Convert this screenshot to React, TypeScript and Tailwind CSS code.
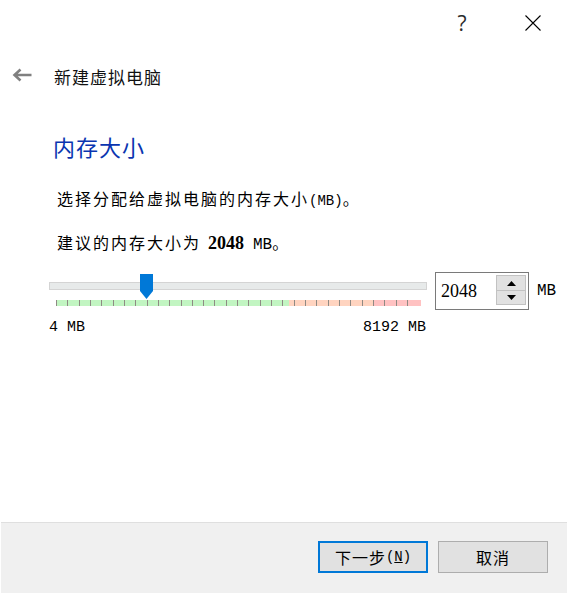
import React from "react";

const CJK = "font-['Noto_Sans_CJK_SC',sans-serif]";
const MONO = "font-['Liberation_Mono','Noto_Sans_CJK_SC',monospace]";
const SERIF = "font-['Liberation_Serif','Noto_Sans_CJK_SC',serif]";

const TICKS = Array.from({ length: 32 }, (_, k) => k * 11.32);

export default function App() {
  const min = 4;
  const max = 8192;
  const value = 2048;
  const travel = 365;
  const thumbLeft = ((value - min) / (max - min)) * travel;

  return (
    <div className={`w-[568px] h-[593px] bg-white flex flex-col text-black ${CJK}`}>
      <div className="flex-1 flex flex-col">
        {/* title bar */}
        <div className="h-[45px] flex items-center justify-end pr-[27px]">
          <div className="w-[20px] text-center text-[21px] leading-[24px] text-[#2b2b2b] font-['Open_Sans',sans-serif] mt-[1px]">
            ?
          </div>
          <div className="ml-[53px] w-[16px] h-[16px]">
            <svg width="16" height="16" viewBox="0 0 16 16">
              <path d="M0.5 0.5 L15.5 15.5 M15.5 0.5 L0.5 15.5" stroke="#000" strokeWidth="1.1" fill="none" />
            </svg>
          </div>
        </div>

        {/* header */}
        <div className="mt-[17px] h-[30px] flex items-center pl-[12px]">
          <svg width="20" height="14" viewBox="0 0 20 14" className="mb-[4px]">
            <path d="M19.5 7 H3 M8.5 1.5 L2.5 7 L8.5 12.5" stroke="#808080" strokeWidth="2.6" fill="none" />
          </svg>
          <div className="ml-[22px] text-[17px] leading-[30px] tracking-[1px] text-[#111]">新建虚拟电脑</div>
        </div>

        {/* heading */}
        <div className="mt-[38px] h-[32px] pl-[53px] text-[22px] leading-[32px] tracking-[1px] text-[#0a35b0]">
          内存大小
        </div>

        {/* para 1 */}
        <div className="mt-[24px] h-[24px] pl-[57px] text-[16px] leading-[24px] whitespace-nowrap">
          <span className="tracking-[2px]">选择分配给虚拟电脑的内存大小</span>
          <span className={`${MONO} text-[14px]`}>(MB)</span>
          <span>。</span>
        </div>

        {/* para 2 */}
        <div className="mt-[20px] h-[24px] pl-[57px] text-[16px] leading-[24px] whitespace-nowrap">
          <span className="tracking-[2px]">建议的内存大小为</span>
          <span className={`${SERIF} text-[18px] font-bold ml-[7px]`}>2048</span>
          <span className={`${MONO} text-[16px] ml-[9px]`}>MB</span>
          <span>。</span>
        </div>

        {/* slider row */}
        <div className="mt-[18px] flex items-start pl-[49px]">
          <div className="relative w-[378px]">
            <div className="mt-[10px] h-[8px] bg-[#e7eaea] border border-[#d4d4d4]" />
            <div className="mt-[10px] ml-[7px] w-[365px] h-[6px] relative flex">
              <div className="w-[233px] h-full bg-[#c2f5c2]" />
              <div className="w-[84px] h-full bg-[#ffd4c0]" />
              <div className="flex-1 h-full bg-[#ffc2c2]" />
              {TICKS.map((x, i) => (
                <div
                  key={i}
                  className="absolute top-0 w-[1px] h-full bg-[#8f8a84]"
                  style={{ left: Math.round(x) }}
                />
              ))}
            </div>
            <div className={`mt-[14px] h-[16px] leading-[16px] flex justify-between ${MONO} text-[15px]`}>
              <span>4 MB</span>
              <span className="mr-[1px]">8192 MB</span>
            </div>
            <svg
              width="13"
              height="25"
              viewBox="0 0 13 25"
              className="absolute top-[2px]"
              style={{ left: thumbLeft }}
            >
              <polygon points="0,0 13,0 13,17 6.5,25 0,17" fill="#0078d7" />
            </svg>
          </div>

          <div className="ml-[8px] w-[94px] h-[38px] border border-[#7a7a7a] flex items-start bg-white">
            <div className={`flex-1 h-full flex items-center pl-[5px] ${SERIF} text-[18px]`}>2048</div>
            <div className="mt-[2px] mr-[2px] w-[30px] flex flex-col">
              <div className="h-[16px] bg-[#e1e1e1] border border-[#c2c2c2] flex items-center justify-center">
                <svg width="9" height="5" viewBox="0 0 9 5">
                  <polygon points="0,5 9,5 4.5,0" fill="#000" />
                </svg>
              </div>
              <div className="h-[14px] bg-[#e1e1e1] border border-[#c2c2c2] border-t-0 flex items-center justify-center">
                <svg width="9" height="5" viewBox="0 0 9 5">
                  <polygon points="0,0 9,0 4.5,5" fill="#000" />
                </svg>
              </div>
            </div>
          </div>
          <div className={`ml-[8px] h-[38px] leading-[38px] ${MONO} text-[16px]`}>MB</div>
        </div>
      </div>

      {/* footer */}
      <div className="h-[71px] mx-px bg-[#f0f0f0] border-t border-[#dfdfdf] flex justify-end items-start pt-[18px] pr-[19px]">
        <button className="w-[110px] h-[32px] bg-[#e1e1e1] border-2 border-[#0078d7] flex items-center justify-center text-[16px] text-black">
          <span className="tracking-[1px]">下一步</span>
          <span className={`${MONO} text-[14px]`}>
            (<span className="underline">N</span>)
          </span>
        </button>
        <button className="ml-[10px] w-[110px] h-[32px] bg-[#e1e1e1] border border-[#adadad] flex items-center justify-center text-[16px] tracking-[1px] text-black">
          取消
        </button>
      </div>
    </div>
  );
}
